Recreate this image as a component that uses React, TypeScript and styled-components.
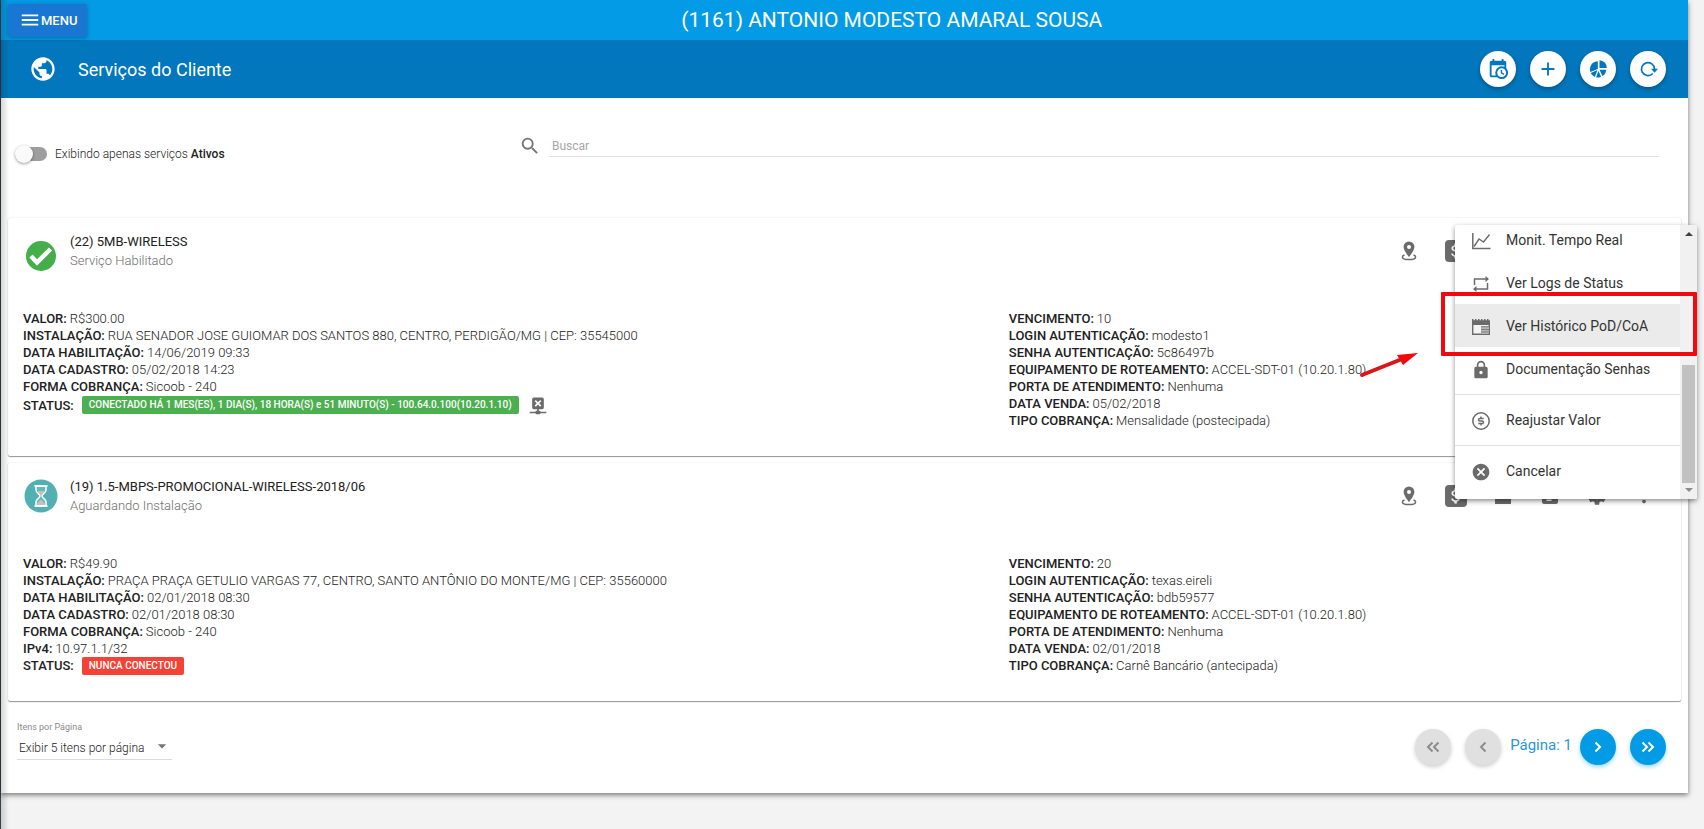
import React from 'react';
import styled, { createGlobalStyle } from 'styled-components';
import {
  MdAdd,
  MdArrowDropDown,
  MdAttachMoney,
  MdCancel,
  MdLock,
  MdMenu,
  MdMoreVert,
  MdPublic,
  MdSearch,
  MdSettings,
} from 'react-icons/md';

const GlobalStyle = createGlobalStyle`
  *, *::before, *::after { box-sizing: border-box; }
  body {
    margin: 0;
    background: #f3f3f3;
    color: #212121;
    font-family: Roboto, "Liberation Sans", sans-serif;
    font-size: 13px;
  }
  button, input, select { font: inherit; color: inherit; }
  svg { display: block; }
  ul { list-style: none; margin: 0; padding: 0; }
`;

/* ---------- page frame ---------- */

const Page = styled.div`
  position: relative;
  min-height: 100vh;
  padding-right: 16px;
  border-left: 1px solid #37424a;

  &::after {
    content: '';
    position: absolute;
    inset: 0 auto 0 0;
    width: 8px;
    background: linear-gradient(to right, rgba(0, 0, 0, 0.16), rgba(0, 0, 0, 0));
    pointer-events: none;
  }
`;

const Panel = styled.main`
  background: #fff;
  box-shadow: 0 2px 5px rgba(0, 0, 0, 0.5);
`;

const TopBar = styled.header`
  display: flex;
  align-items: center;
  height: 40px;
  padding: 0 0 0 7px;
  background: #039be5;
  color: #fff;
`;

const MenuButton = styled.button`
  display: flex;
  align-items: center;
  height: 33px;
  padding: 0 10px 0 11px;
  border: 0;
  border-radius: 2px;
  background: #1976d2;
  box-shadow: 0 1px 4px rgba(0, 0, 0, 0.3);
  color: #fff;
  font-size: 13px;
  font-weight: 500;
`;

const ClientName = styled.h1`
  flex: 1;
  margin: 0;
  padding-left: 8px;
  text-align: center;
  font-size: 21px;
  font-weight: 400;
  line-height: 40px;
`;

const ToolBar = styled.div`
  display: flex;
  align-items: center;
  height: 58px;
  padding: 0 22px 0 28px;
  background: #0277bd;
  color: #fff;
`;

const ToolTitle = styled.h2`
  flex: 1;
  margin: 0 0 0 21px;
  font-size: 18px;
  font-weight: 400;
`;

const ToolActions = styled.div`
  display: flex;
  gap: 14px;
`;

const RoundButton = styled.button<{ $tone: 'white' | 'blue' | 'grey' }>`
  display: flex;
  align-items: center;
  justify-content: center;
  width: 36px;
  height: 36px;
  padding: 0;
  border: 0;
  border-radius: 50%;
  background: ${(p) => ({ white: '#fff', blue: '#039be5', grey: '#e0e0e0' })[p.$tone]};
  color: ${(p) => ({ white: '#0277bd', blue: '#fff', grey: '#8c8c8c' })[p.$tone]};
  box-shadow: 0 2px 4px
    ${(p) => ({ white: 'rgba(0,0,0,.3)', blue: 'rgba(3,155,229,.4)', grey: 'rgba(0,0,0,.2)' })[p.$tone]};
`;

/* ---------- filters ---------- */

const Filters = styled.div`
  display: flex;
  align-items: flex-start;
  height: 120px;
  padding: 36px 29px 0 14px;
`;

const SwitchLabel = styled.label`
  display: flex;
  align-items: center;
  gap: 8px;
  width: 504px;
  height: 40px;
  font-size: 12px;
  font-weight: 300;

  b { font-weight: 500; }
`;

const Switch = styled.input`
  display: flex;
  align-items: center;
  appearance: none;
  width: 32px;
  height: 20px;
  margin: 0;

  &::before {
    content: '';
    z-index: 1;
    width: 18px;
    height: 18px;
    border-radius: 50%;
    background: #fafafa;
    box-shadow: 0 1px 3px rgba(0, 0, 0, 0.4);
  }

  &::after {
    content: '';
    width: 28px;
    height: 14px;
    margin-left: -14px;
    border-radius: 7px;
    background: #9e9e9e;
  }
`;

const SearchBox = styled.label`
  display: flex;
  flex: 1;
  align-items: flex-end;
  gap: 8px;
  color: #757575;
`;

const SearchInput = styled.input`
  flex: 1;
  height: 23px;
  padding: 2px 3px 0;
  border: 0;
  border-bottom: 1px solid #e0e0e0;
  outline: 0;
  background: transparent;
  font-size: 12px;

  &::placeholder { color: #a6a6a6; opacity: 1; }
`;

/* ---------- service cards ---------- */

const CardList = styled.div`
  display: flex;
  flex-direction: column;
  gap: 7px;
  padding: 0 7px;
`;

const Card = styled.article`
  position: relative;
  padding: 0 15px 27px;
  border-radius: 2px;
  background: #fff;
  box-shadow: 0 1px 1px rgba(0, 0, 0, 0.4), 0 0 2px rgba(0, 0, 0, 0.14);
`;

const CardHead = styled.div`
  display: flex;
  height: 92px;
`;

const Avatar = styled.div<{ $badge?: boolean }>`
  display: flex;
  align-items: center;
  justify-content: center;
  width: 36px;
  height: 33px;
  margin: ${(p) => (p.$badge ? 21 : 16)}px 11px 0 0;
`;

const CardTitles = styled.div`
  flex: 1;
  padding-top: 14px;
`;

const CardTitle = styled.h3`
  margin: 0;
  font-size: 13px;
  font-weight: 400;
  line-height: 19px;
`;

const CardSubtitle = styled.p`
  margin: 0;
  color: #6e6e6e;
  font-size: 13px;
  font-weight: 300;
  line-height: 19px;
`;

const CardActions = styled.div`
  display: flex;
  gap: 23px;
  padding: 21px 10px 0 0;
`;

const IconButton = styled.button`
  display: flex;
  align-items: center;
  justify-content: center;
  width: 24px;
  height: 24px;
  padding: 0;
  border: 0;
  background: none;
  color: #6b6b6b;
`;

const Details = styled.div`
  display: grid;
  grid-template-columns: 60% 40%;
`;

const DetailList = styled.ul`
  font-weight: 300;
  line-height: 17px;
`;

const DetailRow = styled.li<{ $tall?: boolean }>`
  display: flex;
  align-items: center;
  gap: 3px;
  height: ${(p) => (p.$tall ? 20 : 17)}px;

  strong { font-weight: 500; }
`;

const Badge = styled.span<{ $tone: 'green' | 'red' }>`
  margin: 0 6px 0 5px;
  padding: 0 7px;
  border-radius: 2px;
  background: ${(p) => (p.$tone === 'green' ? '#4caf50' : '#f44336')};
  color: #fff;
  font-size: 10px;
  font-weight: 500;
  line-height: 18px;
`;

/* ---------- actions menu ---------- */

const MenuLayer = styled.div`
  position: absolute;
  top: 7px;
  right: -16px;
  z-index: 2;
  width: 242px;
`;

const MenuBox = styled.div`
  display: flex;
  height: 274px;
  overflow: hidden;
  border-radius: 2px;
  background: #fff;
  box-shadow: 0 2px 5px rgba(0, 0, 0, 0.45);
`;

const MenuList = styled.ul`
  display: flex;
  flex: 1;
  flex-direction: column;
  justify-content: flex-end;
  padding-bottom: 7px;
`;

const MenuSeparator = styled.li`
  flex: none;
  height: 1px;
  margin: 4px 0 3px;
  background: #dedede;
`;

const MenuItem = styled.button<{ $active?: boolean }>`
  display: flex;
  align-items: center;
  gap: 15px;
  width: 100%;
  height: 43px;
  padding: 0 16px;
  border: 0;
  background: ${(p) => (p.$active ? '#ebebeb' : 'transparent')};
  color: #333;
  font-size: 14px;
  text-align: left;

  svg { margin-top: 3px; color: #6b6b6b; }
`;

const ScrollTrack = styled.div`
  display: flex;
  flex-direction: column;
  align-items: center;
  justify-content: space-between;
  width: 17px;
  padding: 6px 0;
  background: #f1f1f1;
`;

const ScrollThumb = styled.div`
  width: 13px;
  height: 118px;
  margin: auto 0 5px;
  background: #c1c1c1;
`;

const HighlightFrame = styled.div`
  position: absolute;
  inset: 67px 0 auto -14px;
  height: 64px;
  border: 4px solid #ee0a0e;
  border-radius: 1px;
`;

const Pointer = styled.svg`
  position: absolute;
  top: 124px;
  right: 278px;
`;

/* ---------- footer ---------- */

const Footer = styled.footer`
  display: flex;
  align-items: flex-start;
  justify-content: space-between;
  padding: 20px 22px 28px 16px;
`;

const PageSize = styled.label`
  display: flex;
  flex-direction: column;
  color: #8a8a8a;
  font-size: 9px;
  line-height: 12px;
`;

const SelectWrap = styled.span`
  display: grid;
  align-items: center;
  width: 155px;
  border-bottom: 1px solid #dcdcdc;

  > * { grid-area: 1 / 1; }
  svg { justify-self: end; pointer-events: none; color: #757575; }
`;

const Select = styled.select`
  appearance: none;
  height: 26px;
  padding: 4px 24px 0 2px;
  border: 0;
  outline: 0;
  background: transparent;
  color: #212121;
  font-size: 12px;
  font-weight: 300;
  line-height: 16px;
`;

const Pager = styled.nav`
  display: flex;
  gap: 14px;
  padding-top: 8px;
`;

const PageNumber = styled.span`
  margin: 0 -6px 0 -5px;
  color: #2d96d8;
  font-size: 15px;
  line-height: 32px;
`;

/* ---------- icons ---------- */

const CalendarClock = () => (
  <svg width="22" height="22" viewBox="0 0 24 24" fill="currentColor">
    <path d="M15,13H16.5V15.82L18.94,17.23L18.19,18.53L15,16.69V13M19,8H5V19H9.67C9.24,18.09 9,17.07 9,16A7,7 0 0,1 16,9C17.07,9 18.09,9.24 19,9.67V8M5,21C3.89,21 3,20.1 3,19V5C3,3.89 3.89,3 5,3H6V1H8V3H16V1H18V3H19A2,2 0 0,1 21,5V11.1C22.24,12.36 23,14.09 23,16A7,7 0 0,1 16,23C14.09,23 12.36,22.24 11.1,21H5M16,11.15A4.85,4.85 0 0,0 11.15,16C11.15,18.68 13.32,20.85 16,20.85A4.85,4.85 0 0,0 20.85,16C20.85,13.32 18.68,11.15 16,11.15Z" />
  </svg>
);

const PieIcon = () => (
  <svg width="20" height="20" viewBox="0 0 20 20" fill="currentColor">
    <path d="M11.5 1.2a7.600 7.600 0 0 1 7.300 7.800h-7.300z" />
    <path d="M9.800 2.300v7.600L2.400 13A8 8 0 0 1 9.800 2.300z" />
    <path d="M9.500 11l-2.600 7A8 8 0 0 1 2.700 14z" />
    <path d="M10.400 11.700l2.700 6a8 8 0 0 1-5 .7z" />
    <path d="M11.500 10.700h6.700a8 8 0 0 1-3.800 6.400z" />
  </svg>
);

const ReloadIcon = () => (
  <svg width="20" height="20" viewBox="0 0 20 20" fill="none" stroke="currentColor" strokeWidth="1.700">
    <path d="M14.800 14.500A6.500 6.500 0 1 1 16.500 10" />
    <path d="M13 9.800h7l-3.500 4z" fill="currentColor" stroke="none" />
  </svg>
);

const CloseNetwork = () => (
  <svg width="20" height="20" viewBox="0 0 24 24" fill="#6b6b6b">
    <path d="M14.59,6L12,8.59L9.41,6L8,7.41L10.59,10L8,12.59L9.41,14L12,11.41L14.59,14L16,12.59L13.41,10L16,7.41L14.59,6M17,3A2,2 0 0,1 19,5V15A2,2 0 0,1 17,17H13V19H14A1,1 0 0,1 15,20H22V22H15A1,1 0 0,1 14,23H10A1,1 0 0,1 9,22H2V20H9A1,1 0 0,1 10,19H11V17H7C5.89,17 5,16.1 5,15V5A2,2 0 0,1 7,3H17Z" />
  </svg>
);

const Chevrons = ({ left, double }: { left?: boolean; double?: boolean }) => (
  <svg width="20" height="20" viewBox="0 0 20 20" fill="none" stroke="currentColor" strokeWidth="2">
    <g transform={left ? 'rotate(180 10 10)' : undefined}>
      {double ? <path d="M4.500 5.500L9 10l-4.500 4.500M10.500 5.500L15 10l-4.500 4.500" /> : <path d="M7.500 5.500L12 10l-4.500 4.500" />}
    </g>
  </svg>
);

const PinIcon = () => (
  <svg width="20" height="22" viewBox="0 0 20 22" fill="currentColor">
    <path fillRule="evenodd" d="M10 1.500a5.400 5.400 0 0 1 5.400 5.400C15.400 10.500 10 17 10 17S4.600 10.500 4.600 6.900A5.400 5.400 0 0 1 10 1.500zm0 3.500a2 2 0 1 0 0 4 2 2 0 0 0 0-4z" />
    <path d="M5.500 15C4 15.500 3.400 16.200 3.400 16.900c0 1.500 3 2.600 6.600 2.600s6.600-1.100 6.600-2.600c0-.7-.6-1.400-2.100-1.900" fill="none" stroke="currentColor" strokeWidth="1.500" />
  </svg>
);

const MoneyBox = styled.span`
  display: flex;
  align-items: center;
  justify-content: center;
  width: 22px;
  height: 22px;
  border-radius: 4px;
  background: #6b6b6b;
  color: #fff;
`;

const NoteIcon = () => (
  <svg width="22" height="22" viewBox="0 0 22 22" fill="currentColor">
    <path d="M3 4h7l2 2h7v13H3z" />
  </svg>
);

const BoxIcon = () => (
  <svg width="22" height="22" viewBox="0 0 22 22" fill="currentColor">
    <path fillRule="evenodd" d="M3 5a2 2 0 0 1 2-2h12a2 2 0 0 1 2 2v12a2 2 0 0 1-2 2H5a2 2 0 0 1-2-2zm4.500 9.500V16h5v-1.500z" />
  </svg>
);

const HourglassIcon = () => (
  <svg width="34" height="34" viewBox="0 0 34 34">
    <circle cx="17" cy="17" r="16.500" fill="#52b0b2" />
    <path d="M12 7v4c0 3 4 4 4 6s-4 3-4 6v4h10v-4c0-3-4-4-4-6s4-3 4-6V7" fill="#5fbcbd" stroke="#fff" strokeWidth="1.500" />
    <path d="M13 12h8c-.5 2-3 2.500-4 4.500-1-2-3.500-2.500-4-4.500zM13 26c0-3 3-4 4-5.500 1 1.500 4 2.500 4 5.500z" fill="#c9bfb8" />
    <path d="M10.500 7h13M10.500 27h13" stroke="#fff" strokeWidth="2.200" />
  </svg>
);

const EnabledIcon = () => (
  <svg width="30" height="30" viewBox="0 0 30 30">
    <circle cx="15" cy="15" r="15" fill="#43ae4a" />
    <path d="M5 15l6 6.500L24.500 8" fill="none" stroke="#fff" strokeWidth="4.500" />
  </svg>
);

const ChartIcon = () => (
  <svg width="20" height="20" viewBox="0 0 20 20" fill="none" stroke="currentColor" strokeWidth="1.500">
    <path d="M1.800 2v15.500H19.500" />
    <path d="M3 15.500l5-7.500 4.500 3 6-7.500" strokeWidth="1.400" />
  </svg>
);

const RepeatIcon = () => (
  <svg width="20" height="20" viewBox="0 0 20 20" fill="none" stroke="currentColor" strokeWidth="1.500">
    <path d="M3.500 11V5H16M16.500 9v6H4" />
    <path d="M14.500 2l3.500 3-3.500 3zM5.500 12l-3.500 3 3.500 3z" fill="currentColor" stroke="none" />
  </svg>
);

const HistoryIcon = () => (
  <svg width="20" height="20" viewBox="0 0 20 20">
    <path d="M1.700 5v12.300h16.600V5" fill="#f4f4f4" stroke="#6b6b6b" strokeWidth="1.400" />
    <path d="M1 8V2h1.500v1.300H4V2h1.500v1.300H7V2h1.500v1.300H10V2h1.500v1.300H13V2h1.500v1.300H16V2h1.500v1.300H19V8z" fill="#6b6b6b" />
    <path d="M10 9.200h7.600v7.400H10z" fill="#b5b5b5" />
    <path d="M10 9.700h8M10 12.600h8M10 15h8" stroke="#808080" strokeWidth="1" />
  </svg>
);

const CoinIcon = () => (
  <svg width="20" height="20" viewBox="0 0 20 20" fill="none" stroke="currentColor" strokeWidth="1.500">
    <circle cx="10" cy="10" r="8.200" />
    <path d="M12.700 7.500H8.800a1.200 1.200 0 0 0 0 2.500h2.400a1.200 1.200 0 0 1 0 2.500H7.300M10 5.500v2M10 12.500v2" />
  </svg>
);

/* ---------- content ---------- */

type Service = {
  title: string;
  state: string;
  left: [string, string][];
  right: [string, string][];
  status: string;
  online: boolean;
};

const services: Service[] = [
  {
    title: '(22) 5MB-WIRELESS',
    state: 'Serviço Habilitado',
    left: [
      ['VALOR:', 'R$300.00'],
      ['INSTALAÇÃO:', 'RUA SENADOR JOSE GUIOMAR DOS SANTOS 880, CENTRO, PERDIGÃO/MG | CEP: 35545000'],
      ['DATA HABILITAÇÃO:', '14/06/2019 09:33'],
      ['DATA CADASTRO:', '05/02/2018 14:23'],
      ['FORMA COBRANÇA:', 'Sicoob - 240'],
    ],
    right: [
      ['VENCIMENTO:', '10'],
      ['LOGIN AUTENTICAÇÃO:', 'modesto1'],
      ['SENHA AUTENTICAÇÃO:', '5c86497b'],
      ['EQUIPAMENTO DE ROTEAMENTO:', 'ACCEL-SDT-01 (10.20.1.80)'],
      ['PORTA DE ATENDIMENTO:', 'Nenhuma'],
      ['DATA VENDA:', '05/02/2018'],
      ['TIPO COBRANÇA:', 'Mensalidade (postecipada)'],
    ],
    status: 'CONECTADO HÁ 1 MES(ES), 1 DIA(S), 18 HORA(S) e 51 MINUTO(S) - 100.64.0.100(10.20.1.10)',
    online: true,
  },
  {
    title: '(19) 1.5-MBPS-PROMOCIONAL-WIRELESS-2018/06',
    state: 'Aguardando Instalação',
    left: [
      ['VALOR:', 'R$49.90'],
      ['INSTALAÇÃO:', 'PRAÇA PRAÇA GETULIO VARGAS 77, CENTRO, SANTO ANTÔNIO DO MONTE/MG | CEP: 35560000'],
      ['DATA HABILITAÇÃO:', '02/01/2018 08:30'],
      ['DATA CADASTRO:', '02/01/2018 08:30'],
      ['FORMA COBRANÇA:', 'Sicoob - 240'],
      ['IPv4:', '10.97.1.1/32'],
    ],
    right: [
      ['VENCIMENTO:', '20'],
      ['LOGIN AUTENTICAÇÃO:', 'texas.eireli'],
      ['SENHA AUTENTICAÇÃO:', 'bdb59577'],
      ['EQUIPAMENTO DE ROTEAMENTO:', 'ACCEL-SDT-01 (10.20.1.80)'],
      ['PORTA DE ATENDIMENTO:', 'Nenhuma'],
      ['DATA VENDA:', '02/01/2018'],
      ['TIPO COBRANÇA:', 'Carnê Bancário (antecipada)'],
    ],
    status: 'NUNCA CONECTOU',
    online: false,
  },
];

const Row = ({ label, value }: { label: string; value: string }) => (
  <DetailRow>
    <strong>{label}</strong>
    <span>{value}</span>
  </DetailRow>
);

const ActionsMenu = () => (
  <MenuLayer>
    <MenuBox>
      <MenuList>
        <li><MenuItem><ChartIcon />Monit. Tempo Real</MenuItem></li>
        <li><MenuItem><RepeatIcon />Ver Logs de Status</MenuItem></li>
        <li><MenuItem $active><HistoryIcon />Ver Histórico PoD/CoA</MenuItem></li>
        <li><MenuItem><MdLock size={20} />Documentação Senhas</MenuItem></li>
        <MenuSeparator />
        <li><MenuItem><CoinIcon />Reajustar Valor</MenuItem></li>
        <MenuSeparator />
        <li><MenuItem><MdCancel size={20} />Cancelar</MenuItem></li>
      </MenuList>
      <ScrollTrack>
        <svg width="8" height="5" viewBox="0 0 8 5"><path d="M0 5l4-4 4 4z" fill="#404040" /></svg>
        <ScrollThumb />
        <svg width="8" height="5" viewBox="0 0 8 5"><path d="M0 0l4 4 4-4z" fill="#8c8c8c" /></svg>
      </ScrollTrack>
    </MenuBox>
    <HighlightFrame />
    <Pointer width="60" height="30" viewBox="0 0 60 30">
      <path d="M3 26L43 10" stroke="#d8161b" strokeWidth="4" strokeLinecap="round" />
      <path d="M59 4L38 6l6 10z" fill="#f00a0c" />
    </Pointer>
  </MenuLayer>
);

const ServiceCard = ({ service, menuOpen }: { service: Service; menuOpen?: boolean }) => (
  <Card>
    <CardHead>
      <Avatar $badge={service.online}>{service.online ? <EnabledIcon /> : <HourglassIcon />}</Avatar>
      <CardTitles>
        <CardTitle>{service.title}</CardTitle>
        <CardSubtitle>{service.state}</CardSubtitle>
      </CardTitles>
      <CardActions>
        <IconButton aria-label="Localização"><PinIcon /></IconButton>
        <IconButton aria-label="Financeiro"><MoneyBox><MdAttachMoney size={20} /></MoneyBox></IconButton>
        <IconButton aria-label="Arquivos"><NoteIcon /></IconButton>
        <IconButton aria-label="Atendimentos"><BoxIcon /></IconButton>
        <IconButton aria-label="Configurações"><MdSettings size={22} /></IconButton>
        <IconButton aria-label="Mais opções"><MdMoreVert size={22} /></IconButton>
      </CardActions>
    </CardHead>
    <Details>
      <DetailList>
        {service.left.map(([label, value]) => <Row key={label} label={label} value={value} />)}
        <DetailRow $tall={service.online}>
          <strong>STATUS:</strong>
          <Badge $tone={service.online ? 'green' : 'red'}>{service.status}</Badge>
          {service.online && <CloseNetwork />}
        </DetailRow>
      </DetailList>
      <DetailList>
        {service.right.map(([label, value]) => <Row key={label} label={label} value={value} />)}
      </DetailList>
    </Details>
    {menuOpen && <ActionsMenu />}
  </Card>
);

export default function App() {
  return (
    <Page>
      <GlobalStyle />
      <Panel>
        <TopBar>
          <MenuButton><MdMenu size={22} />MENU</MenuButton>
          <ClientName>(1161) ANTONIO MODESTO AMARAL SOUSA</ClientName>
        </TopBar>
        <ToolBar>
          <MdPublic size={28} />
          <ToolTitle>Serviços do Cliente</ToolTitle>
          <ToolActions>
            <RoundButton $tone="white" aria-label="Agenda"><CalendarClock /></RoundButton>
            <RoundButton $tone="white" aria-label="Adicionar"><MdAdd size={22} /></RoundButton>
            <RoundButton $tone="white" aria-label="Gráficos"><PieIcon /></RoundButton>
            <RoundButton $tone="white" aria-label="Atualizar"><ReloadIcon /></RoundButton>
          </ToolActions>
        </ToolBar>
        <Filters>
          <SwitchLabel>
            <Switch type="checkbox" role="switch" />
            <span>Exibindo apenas serviços <b>Ativos</b></span>
          </SwitchLabel>
          <SearchBox>
            <MdSearch size={22} />
            <SearchInput type="text" placeholder="Buscar" aria-label="Buscar" />
          </SearchBox>
        </Filters>
        <CardList>
          {services.map((service, i) => (
            <ServiceCard key={service.title} service={service} menuOpen={i === 0} />
          ))}
        </CardList>
        <Footer>
          <PageSize>
            Itens por Página
            <SelectWrap>
              <Select defaultValue="5">
                <option value="5">Exibir 5 itens por página</option>
              </Select>
              <MdArrowDropDown size={20} />
            </SelectWrap>
          </PageSize>
          <Pager aria-label="Paginação">
            <RoundButton $tone="grey" aria-label="Primeira página"><Chevrons left double /></RoundButton>
            <RoundButton $tone="grey" aria-label="Página anterior"><Chevrons left /></RoundButton>
            <PageNumber>Página: 1</PageNumber>
            <RoundButton $tone="blue" aria-label="Próxima página"><Chevrons /></RoundButton>
            <RoundButton $tone="blue" aria-label="Última página"><Chevrons double /></RoundButton>
          </Pager>
        </Footer>
      </Panel>
    </Page>
  );
}
